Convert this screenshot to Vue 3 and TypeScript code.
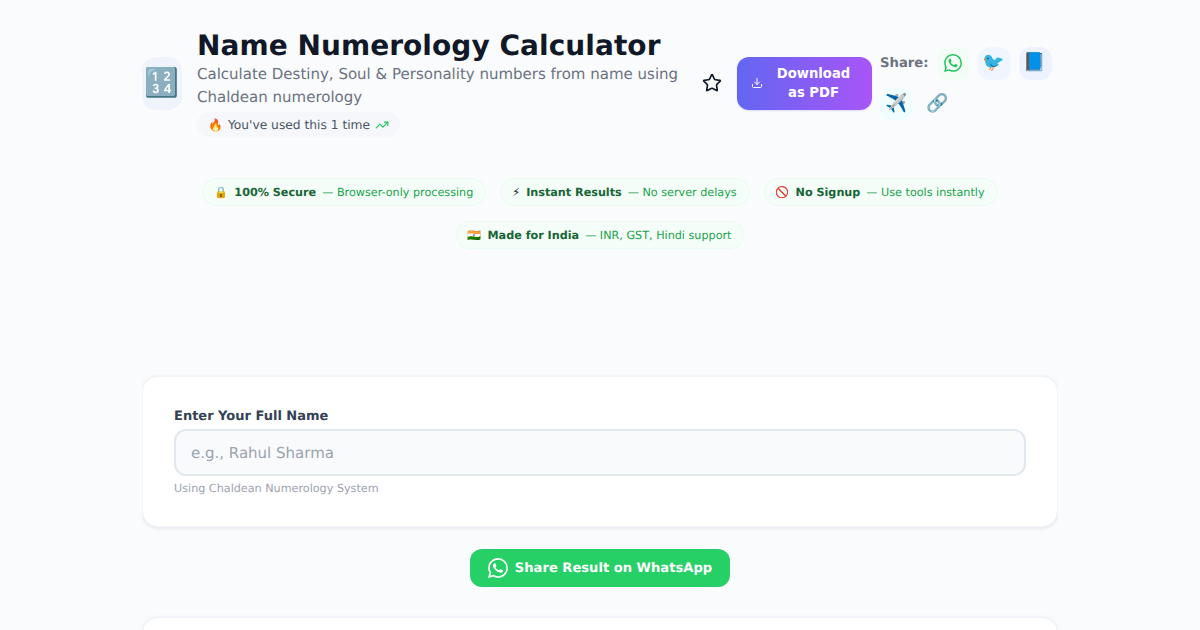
<script setup lang="ts">
interface Pill { icon: string; title: string; text: string }
const pills: Pill[] = [
  { icon: '🔒', title: '100% Secure', text: '— Browser-only processing' },
  { icon: '⚡', title: 'Instant Results', text: '— No server delays' },
  { icon: '🚫', title: 'No Signup', text: '— Use tools instantly' },
  { icon: '🇮🇳', title: 'Made for India', text: '— INR, GST, Hindi support' },
]
const whatsapp = 'M17.472 14.382c-.297-.149-1.758-.867-2.03-.967-.273-.099-.471-.148-.67.15-.197.297-.767.966-.94 1.164-.173.199-.347.223-.644.075-.297-.15-1.255-.463-2.39-1.475-.883-.788-1.48-1.761-1.653-2.059-.173-.297-.018-.458.13-.606.134-.133.298-.347.446-.52.149-.174.198-.298.298-.497.099-.198.05-.371-.025-.52-.075-.149-.669-1.612-.916-2.207-.242-.579-.487-.5-.669-.51-.173-.008-.371-.01-.57-.01-.198 0-.52.074-.792.372-.272.297-1.04 1.016-1.04 2.479 0 1.462 1.065 2.875 1.213 3.074.149.198 2.096 3.2 5.077 4.487.709.306 1.262.489 1.694.625.712.227 1.36.195 1.871.118.571-.085 1.758-.719 2.006-1.413.248-.694.248-1.289.173-1.413-.074-.124-.272-.198-.57-.347m-5.421 7.403h-.004a9.87 9.87 0 01-5.031-1.378l-.361-.214-3.741.982.998-3.648-.235-.374a9.86 9.86 0 01-1.51-5.26c.001-5.45 4.436-9.884 9.888-9.884 2.64 0 5.122 1.03 6.988 2.898a9.825 9.825 0 012.893 6.994c-.003 5.45-4.437 9.884-9.885 9.884m8.413-18.297A11.815 11.815 0 0012.05 0C5.495 0 .16 5.335.157 11.892c0 2.096.547 4.142 1.588 5.945L.057 24l6.305-1.654a11.882 11.882 0 005.683 1.448h.005c6.554 0 11.89-5.335 11.893-11.893a11.821 11.821 0 00-3.48-8.413z'
</script>

<template>
  <div class="page">
    <header class="header">
      <div class="intro">
        <div class="logo">🔢</div>
        <div class="intro-text">
          <h1>Name Numerology Calculator</h1>
          <p class="sub">Calculate Destiny, Soul &amp; Personality numbers from name using Chaldean numerology</p>
          <div class="usage">
            <span class="usage-icon">🔥</span>
            <span>You've used this 1 time</span>
            <svg width="14" height="14" viewBox="0 0 24 24" fill="none" stroke="#22c55e" stroke-width="2" stroke-linecap="round" stroke-linejoin="round"><path d="M22 7 13.5 15.5 8.5 10.5 2 17" /><path d="M16 7h6v6" /></svg>
          </div>
        </div>
      </div>
      <div class="actions">
        <svg class="star" width="20" height="20" viewBox="0 0 24 24" fill="none" stroke="#111827" stroke-width="2" stroke-linecap="round" stroke-linejoin="round"><path d="M11.525 2.295a.53.53 0 0 1 .95 0l2.31 4.679a2.123 2.123 0 0 0 1.595 1.16l5.166.756a.53.53 0 0 1 .294.904l-3.736 3.638a2.123 2.123 0 0 0-.611 1.878l.882 5.14a.53.53 0 0 1-.771.56l-4.618-2.428a2.122 2.122 0 0 0-1.973 0L6.396 21.01a.53.53 0 0 1-.77-.56l.881-5.139a2.122 2.122 0 0 0-.611-1.879L2.16 9.795a.53.53 0 0 1 .294-.906l5.165-.755a2.122 2.122 0 0 0 1.597-1.16z" /></svg>
        <button class="pdf">
          <svg width="12" height="12" viewBox="0 0 24 24" fill="none" stroke="#fff" stroke-width="2" stroke-linecap="round" stroke-linejoin="round"><path d="M12 15V3" /><path d="M21 15v4a2 2 0 0 1-2 2H5a2 2 0 0 1-2-2v-4" /><path d="m7 10 5 5 5-5" /></svg>
          <span>Download as PDF</span>
        </button>
        <div class="share">
          <span class="share-label">Share:</span>
          <span class="bubble green">
            <svg width="18" height="18" viewBox="0 0 24 24" fill="#22c55e"><path :d="whatsapp" /></svg>
          </span>
          <span class="bubble blue">🐦</span>
          <span class="bubble indigo">📘</span>
          <span class="bubble sky">✈️</span>
          <span class="bubble plain">🔗</span>
        </div>
      </div>
    </header>

    <div class="pills">
      <div v-for="p in pills" :key="p.title" class="pill">
        <span class="pill-icon">{{ p.icon }}</span>
        <b>{{ p.title }}</b>
        <span class="pill-text">{{ p.text }}</span>
      </div>
    </div>

    <section class="card">
      <label class="label" for="name">Enter Your Full Name</label>
      <input id="name" class="input" placeholder="e.g., Rahul Sharma" />
      <p class="hint">Using Chaldean Numerology System</p>
    </section>

    <div class="wa-row">
      <button class="wa">
        <svg width="20" height="20" viewBox="0 0 24 24" fill="#fff"><path :d="whatsapp" /></svg>
        <span>Share Result on WhatsApp</span>
      </button>
    </div>

    <section class="card next"></section>
  </div>
</template>

<style>
html, body { margin: 0; background: #fafbfd; overflow: hidden; }
</style>

<style scoped>
.page {
  width: 916px;
  height: 630px;
  margin: 0 auto;
  overflow: hidden;
  box-sizing: border-box;
  padding: 29px 0 0;
  font-family: "DejaVu Sans", "Noto Sans", sans-serif;
  color: #111827;
  text-rendering: geometricPrecision;
}
.header { display: flex; align-items: center; justify-content: space-between; padding-bottom: 2px; }
.intro { display: flex; align-items: center; gap: 15px; width: 540px; }
.logo {
  width: 40px;
  height: 53px;
  flex: none;
  border-radius: 14px;
  background: #eff3fb;
  display: flex;
  align-items: center;
  justify-content: center;
  font-size: 28px;
  line-height: 1;
}
.intro-text { min-width: 0; }
h1 { margin: 0; font-size: 28px; line-height: 34px; font-weight: 700; letter-spacing: 0.05px; color: #111827; white-space: nowrap; }
.sub { margin: 0; font-size: 15px; line-height: 23px; color: #6b7280; }
.usage {
  display: inline-flex;
  align-items: center;
  gap: 5px;
  margin-top: 3px;
  height: 25px;
  padding: 0 11px;
  border-radius: 13px;
  background: #f5f7fa;
  font-size: 12.25px;
  color: #4b5563;
}
.usage-icon { font-size: 12px; }
.actions { display: flex; align-items: center; width: 355px; margin-right: 1px; }
.star { flex: none; margin-right: 15px; }
.pdf {
  width: 135px;
  height: 53px;
  flex: none;
  display: flex;
  align-items: center;
  padding: 0 14px;
  gap: 6px;
  border: 0;
  border-radius: 12px;
  background: linear-gradient(90deg, #6366f1, #a855f7);
  color: #fff;
  font: 700 13.2px/19px "DejaVu Sans", sans-serif;
  box-shadow: 0 1px 2px rgba(99, 102, 241, 0.2);
}
.pdf span { flex: 1; text-align: center; }
.share {
  width: 177px;
  flex: none;
  margin-left: 8px;
  padding-top: 1px;
  display: flex;
  flex-wrap: wrap;
  align-items: center;
  gap: 8px;
}
.share-label { font-size: 13.2px; font-weight: 700; color: #6b7280; }
.bubble {
  width: 33px;
  height: 33px;
  border-radius: 12px;
  display: flex;
  align-items: center;
  justify-content: center;
  font-size: 18px;
  line-height: 1;
}
.green { background: #f3fdf6; }
.blue { background: #f0f6ff; }
.indigo { background: #eef2ff; }
.sky { background: #effdff; }
.plain { background: #fafbfd; }
.pills {
  display: flex;
  flex-wrap: wrap;
  justify-content: center;
  gap: 15px 14px;
  margin-top: 39px;
}
.pill {
  display: flex;
  align-items: center;
  height: 26px;
  padding: 0 12px 0 11px;
  border: 1px solid #ebfaf0;
  border-radius: 14px;
  background: #f5fdf8;
  font-size: 11.2px;
  white-space: nowrap;
}
.pill-icon { margin-right: 6px; font-size: 11.2px; }
.pill b { color: #166534; margin-right: 6px; }
.pill-text { color: #16a34a; }
.card {
  background: #fff;
  border: 1px solid #f1f5f9;
  border-radius: 16px;
  box-shadow: 0 1px 4px rgba(15, 23, 42, 0.1);
  box-sizing: border-box;
  margin: 127px 0 0;
  height: 151px;
  padding: 30px 31px;
}
.label { display: block; font-size: 13px; line-height: 20px; font-weight: 700; color: #334155; margin-bottom: 2px; }
.input {
  display: block;
  width: 100%;
  height: 47px;
  box-sizing: border-box;
  padding: 0 15px;
  border: 2px solid #e2e8f0;
  border-radius: 12px;
  background: #f8fafc;
  font: 15px "DejaVu Sans", sans-serif;
  outline: none;
  text-rendering: geometricPrecision;
}
.input::placeholder { color: #9ca3af; opacity: 1; }
.hint { margin: 5px 0 0; font-size: 11.2px; line-height: 16px; color: #9ca3af; }
.wa-row { display: flex; justify-content: center; margin-top: 22px; }
.wa {
  width: 260px;
  height: 38px;
  display: flex;
  align-items: center;
  justify-content: center;
  gap: 7px;
  border: 0;
  border-radius: 12px;
  background: #27d067;
  color: #fff;
  font: 700 13.1px "DejaVu Sans", sans-serif;
  text-rendering: geometricPrecision;
}
.next { margin-top: 30px; height: 200px; }
</style>
